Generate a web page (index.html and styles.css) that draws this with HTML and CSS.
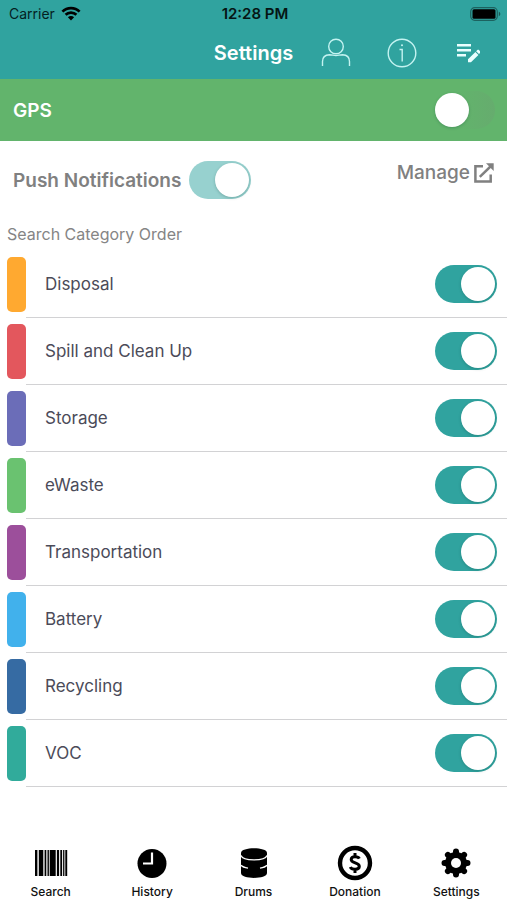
FILE: index.html
```html
<!DOCTYPE html>
<html lang="en">
<head>
<meta charset="utf-8">
<meta name="viewport" content="width=device-width, initial-scale=1">
<title>Settings</title>
<link rel="stylesheet" href="styles.css">
</head>
<body>
<header class="header">
  <div class="status">
    <span class="carrier">Carrier
      <svg width="20" height="15" viewBox="0 0 20 15" fill="none" stroke="#000" stroke-width="2.7"><path d="M1.4 5.6a12.2 12.2 0 0 1 17.2 0M4.6 8.8a7.6 7.6 0 0 1 10.8 0"/><path d="M10 14.4 6.9 11.2a4.4 4.4 0 0 1 6.2 0z" fill="#000" stroke="none"/></svg>
    </span>
    <span class="time">12:28 PM</span>
    <svg class="battery" width="31" height="14" viewBox="0 0 31 14"><rect x=".7" y=".7" width="26.6" height="12.6" rx="4" fill="none" stroke="#000" stroke-opacity=".4" stroke-width="1.2"/><rect x="2.5" y="2.3" width="23" height="9.4" rx="1.5"/><path d="M28.8 4.8c2 .7 2 3.700 0 4.400z" opacity=".45"/></svg>
  </div>
  <div class="navbar">
    <h1 class="title">Settings</h1>
    <div class="actions">
      <button class="action" aria-label="Profile"><svg width="30" height="30" viewBox="0 0 30 30" fill="none" stroke="#c4f3f1" stroke-width="1.4"><circle cx="15" cy="8.500" r="7.300"/><path d="M1.500 28v-4.500q0-6.500 7-6.800c3 0 3.800.9 6.500.9s3.500-.9 6.500-.9q7 .3 7 6.800V28"/></svg></button>
      <button class="action" aria-label="Information"><svg width="30" height="30" viewBox="0 0 30 30" fill="none" stroke="#c4f3f1" stroke-width="1.400"><circle cx="15" cy="15" r="13.800"/><path d="M12.500 11.500h2.700V23.500"/><circle cx="15" cy="7.300" r="1" fill="#c4f3f1" stroke="none"/></svg></button>
      <button class="action" aria-label="Edit order"><svg width="24" height="22" viewBox="0 0 24 22" fill="#eaffff"><path d="M1 2h14v2.600H1zM1 7h14v2.600H1zM1 12h9v2.600H1zM12 17.300l7.400-7.400 3 3-7.400 7.400h-3zM20.100 9.200l1.300-1.300q.7-.6 1.400 0l1.500 1.500q.6.700 0 1.400l-1.300 1.300z"/></svg></button>
    </div>
  </div>
</header>
<main class="main">
  <label class="gps"><span>GPS</span><input class="switch switch-gps" type="checkbox" role="switch"></label>
  <section class="push">
    <label class="push-label"><span>Push Notifications</span><input class="switch switch-soft" type="checkbox" role="switch" checked></label>
    <a class="manage" href="#manage">Manage
      <svg width="20" height="20" viewBox="0 0 20 20" fill="none" stroke="#808080" stroke-width="2.500"><path d="M9 3.300H1.400v15.300h15.300V11.500M5.800 13.800 16.500 3.500"/><path d="M12 .3h7.700V8z" fill="#808080" stroke="none"/></svg>
    </a>
  </section>
  <h2 class="caption">Search Category Order</h2>
  <ul class="list">
    <li class="row"><span class="swatch orange"></span><label class="item"><span>Disposal</span><input class="switch" type="checkbox" role="switch" checked></label></li>
    <li class="row"><span class="swatch red"></span><label class="item"><span>Spill and Clean Up</span><input class="switch" type="checkbox" role="switch" checked></label></li>
    <li class="row"><span class="swatch indigo"></span><label class="item"><span>Storage</span><input class="switch" type="checkbox" role="switch" checked></label></li>
    <li class="row"><span class="swatch green"></span><label class="item"><span>eWaste</span><input class="switch" type="checkbox" role="switch" checked></label></li>
    <li class="row"><span class="swatch purple"></span><label class="item"><span>Transportation</span><input class="switch" type="checkbox" role="switch" checked></label></li>
    <li class="row"><span class="swatch sky"></span><label class="item"><span>Battery</span><input class="switch" type="checkbox" role="switch" checked></label></li>
    <li class="row"><span class="swatch blue"></span><label class="item"><span>Recycling</span><input class="switch" type="checkbox" role="switch" checked></label></li>
    <li class="row"><span class="swatch teal"></span><label class="item"><span>VOC</span><input class="switch" type="checkbox" role="switch" checked></label></li>
  </ul>
</main>
<nav class="tabs">
  <a class="tab" href="#search"><svg width="36" height="36" viewBox="0 0 36 36"><path d="M2 5h2.400v26H2zM5.800 5h4.500v26H5.800zM11.600 5h1.700v26h-1.700zM14.500 5h1.400v26h-1.400zM16.700 5h6v26h-6zM23.900 5h2.200v26h-2.200zM27.300 5h1.800v26h-1.800zM30.100 5h1.300v26h-1.300zM32.300 5h1.900v26h-1.900z"/></svg>Search</a>
  <a class="tab" href="#history"><svg width="36" height="36" viewBox="0 0 36 36"><circle cx="18" cy="18.500" r="14.500"/><path d="M18 7.500V18.500H9" fill="none" stroke="#fff" stroke-width="2.200"/></svg>History</a>
  <a class="tab" href="#drums"><svg width="36" height="36" viewBox="0 0 36 36"><path d="M5 8C5 1.800 31 1.800 31 8v20c0 6.500-26 6.500-26 0z"/><path d="M5 10.500c2 5.800 24 5.800 26 0M5 20.300c1.500 1.700 4 2.400 7 2.900M24 23.200c3-.5 5.500-1.200 7-2.900" fill="none" stroke="#fff" stroke-width="1.300"/></svg>Drums</a>
  <a class="tab" href="#donation"><svg width="36" height="36" viewBox="0 0 36 36" fill="none" stroke="#000"><circle cx="18" cy="18" r="15" stroke-width="4.400"/><path d="M22.300 13.600c-1-2.200-7.800-2.800-8.100.7-.3 4 8 3.200 8.100 7 .1 4-7.700 3.800-9 .7M18 8v4M18 23.500V28" stroke-width="3"/></svg>Donation</a>
  <a class="tab" href="#settings"><svg width="36" height="36" viewBox="0 0 36 36"><g stroke="#000" stroke-width="6" stroke-linecap="round"><path d="M18 6.500v23M6.500 18h23M9.900 9.900l16.200 16.200M9.900 26.100 26.100 9.900"/></g><circle cx="18" cy="18" r="11"/><circle cx="18" cy="18" r="5" fill="#fff"/></svg>Settings</a>
</nav>
</body>
</html>
```
FILE: styles.css
```css
* { box-sizing: border-box; }

body {
  margin: 0;
  min-height: 100vh;
  display: flex;
  flex-direction: column;
  background: #fff;
  font-family: Inter, "Liberation Sans", sans-serif;
  color: #4b4b59;
}

a { color: inherit; text-decoration: none; }

.header { background: #30a39f; }

.status {
  display: grid;
  grid-template-columns: 1fr auto 1fr;
  align-items: center;
  height: 27px;
  padding: 0 6px 0 9px;
  font-size: 14px;
  color: #04211f;
}
.carrier { display: flex; align-items: center; gap: 6px; }
.time { font-size: 15px; font-weight: 600; color: #051514; }
.battery { justify-self: end; }

.navbar {
  display: grid;
  grid-template-columns: 1fr auto 1fr;
  align-items: center;
  height: 52px;
}
.title {
  grid-column: 2;
  margin: 0;
  font-size: 20px;
  font-weight: 600;
  color: #fff;
}
.actions { display: flex; justify-content: flex-end; padding-right: 6px; }
.action {
  display: grid;
  place-items: center;
  width: 66px;
  height: 50px;
  padding: 0;
  border: 0;
  background: none;
}

.main { flex: 1; }

.switch {
  appearance: none;
  display: flex;
  align-items: center;
  flex: none;
  width: 62px;
  height: 38px;
  margin: 0;
  padding: 2px;
  border-radius: 19px;
  background: #30a39f;
}
.switch::before {
  content: "";
  width: 34px;
  height: 34px;
  border-radius: 50%;
  background: #fff;
  box-shadow: 0 1px 3px rgba(0, 60, 50, .25);
}
.switch:checked { justify-content: flex-end; }
.switch-soft { background: #97d1cf; }
.switch-gps { background: linear-gradient(90deg, #62b46c 40%, #66ac6e); }

.gps {
  display: flex;
  align-items: center;
  justify-content: space-between;
  height: 62px;
  padding: 0 12px 0 13px;
  background: #62b46c;
  font-size: 19px;
  font-weight: 600;
  color: #fff;
}

.push {
  display: flex;
  justify-content: space-between;
  align-items: flex-start;
  padding: 20px 13px 0 13px;
  font-size: 19px;
  color: #808080;
}
.push-label { display: flex; align-items: center; gap: 8px; font-weight: 600; }
.manage { display: flex; align-items: center; gap: 4px; line-height: 24px; font-weight: 500; }

.caption {
  margin: 25px 0 7px;
  padding-left: 7px;
  font-size: 16px;
  line-height: 20px;
  font-weight: 400;
  color: #858585;
}

.list { margin: 0; padding: 0 0 0 7px; list-style: none; }
.row { display: flex; align-items: center; height: 67px; }
.swatch { width: 19px; height: 55px; border-radius: 5px; }
.item {
  flex: 1;
  display: flex;
  align-items: center;
  justify-content: space-between;
  height: 100%;
  padding: 0 10px 0 19px;
  border-bottom: 1px solid #d2d2d4;
  font-size: 17px;
}
.orange { background: #ffa930; }
.red { background: #e3575d; }
.indigo { background: #6b6db8; }
.green { background: #6ac270; }
.purple { background: #9c4f9b; }
.sky { background: #41b1ec; }
.blue { background: #366ba3; }
.teal { background: #31ab9b; }

.tabs { display: flex; }
.tab {
  flex: 1;
  display: flex;
  flex-direction: column;
  align-items: center;
  gap: 3px;
  font-size: 12px;
  line-height: 16px;
  font-weight: 500;
  color: #111;
}
```
